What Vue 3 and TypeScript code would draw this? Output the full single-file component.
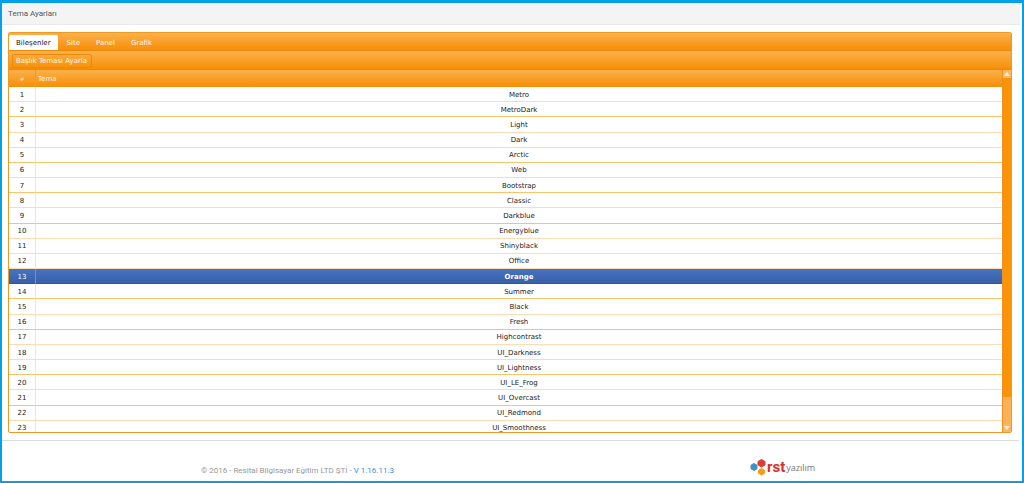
<script setup lang="ts">
import { ref } from 'vue'

const tabs: string[] = ['Bileşenler', 'Site', 'Panel', 'Grafik']
const activeTab = ref(0)
const selected = ref(12)
const themes: string[] = [
  'Metro', 'MetroDark', 'Light', 'Dark', 'Arctic', 'Web', 'Bootstrap', 'Classic',
  'Darkblue', 'Energyblue', 'Shinyblack', 'Office', 'Orange', 'Summer', 'Black',
  'Fresh', 'Highcontrast', 'UI_Darkness', 'UI_Lightness', 'UI_LE_Frog',
  'UI_Overcast', 'UI_Redmond', 'UI_Smoothness',
]
const strongLines: number[] = [1, 4, 6, 8, 13, 15, 18, 20]
</script>

<template>
  <div class="page">
    <header class="title">Tema Ayarları</header>
    <main class="content">
      <section class="panel">
        <nav class="tabs">
          <button
            v-for="(tab, i) in tabs"
            :key="tab"
            type="button"
            class="tab"
            :class="{ active: i === activeTab }"
            @click="activeTab = i"
          >{{ tab }}</button>
        </nav>
        <div class="toolbar">
          <button type="button" class="apply">Başlık Teması Ayarla</button>
        </div>
        <div class="grid">
          <div class="scroller">
            <table>
              <thead>
                <tr><th class="num">#</th><th class="name">Tema</th></tr>
              </thead>
              <tbody>
                <tr
                  v-for="(theme, i) in themes"
                  :key="theme"
                  :class="{ selected: i === selected, strong: strongLines.includes(i) }"
                  @click="selected = i"
                >
                  <td class="num">{{ i + 1 }}</td>
                  <td>{{ theme }}</td>
                </tr>
              </tbody>
            </table>
          </div>
          <div class="scrollbar">
            <button type="button" class="arrow" aria-label="Yukarı">
              <svg viewBox="0 0 6 4" width="6" height="4"><path d="M3 0 6 4H0Z" fill="#fff3df" /></svg>
            </button>
            <div class="thumb"></div>
            <div class="track"></div>
            <button type="button" class="arrow" aria-label="Aşağı">
              <svg viewBox="0 0 6 4" width="6" height="4"><path d="M3 4 0 0H6Z" fill="#fff3df" /></svg>
            </button>
          </div>
        </div>
      </section>
    </main>
    <footer class="footer">
      <p class="copy">© 2016 - Resital Bilgisayar Eğitim LTD ŞTİ - <a href="#">V 1.16.11.3</a></p>
      <div class="logo">
        <svg viewBox="0 0 17 18" width="17" height="18">
          <path d="M4 5.5 7 7.2V10.8L4 12.5 1 10.8V7.2Z" fill="#3f8fcb" stroke="#3f8fcb" stroke-linejoin="round" />
          <path d="M11.5 1.5 15 3.5V7L11.5 9 8 7V3.5Z" fill="#e03a32" stroke="#e03a32" stroke-linejoin="round" />
          <path d="M11.5 10.5 14.5 12.2V15.3L11.5 17 8.5 15.3V12.2Z" fill="#f79b1c" stroke="#f79b1c" stroke-linejoin="round" />
        </svg>
        <span class="rst">rst</span><span class="yazilim">yazılım</span>
      </div>
    </footer>
  </div>
</template>

<style>
body {
  margin: 0;
}
</style>

<style scoped>
.page {
  box-sizing: border-box;
  display: flex;
  flex-direction: column;
  min-height: 100vh;
  border: 2px solid #06a0e8;
  border-top-width: 3px;
  background: #fff;
  font-family: Roboto, "Liberation Sans", Arial, sans-serif;
}
button {
  margin: 0;
  border: 0;
  font: inherit;
  cursor: pointer;
}
.title {
  margin-right: 2px;
  padding: 0 6px;
  border-bottom: 1px solid #e9e9e9;
  background: #f4f4f4;
  color: #555;
  font-size: 8px;
  line-height: 21px;
}
.content {
  margin-right: 3px;
  padding: 7px 7px 7px 6px;
  border-bottom: 1px solid #d9dfdc;
}
.panel {
  overflow: hidden;
  border: 1px solid #ec9a28;
  border-radius: 2px;
  font-family: "DejaVu Sans", Verdana, sans-serif;
  font-size: 7px;
}
.tabs,
.toolbar,
th {
  background: linear-gradient(#fbb04c, #f78f05);
  color: #fff8ec;
}
.tabs {
  display: flex;
  box-sizing: border-box;
  height: 18px;
  padding-top: 2px;
  border-bottom: 1px solid #e98a0b;
}
.tab {
  padding: 0 8px;
  background: transparent;
  color: inherit;
}
.tab.active {
  margin-right: 1px;
  padding: 0 7px;
  border-radius: 2px 2px 0 0;
  background: #fff;
  color: #222;
}
.toolbar {
  display: flex;
  align-items: center;
  box-sizing: border-box;
  height: 19px;
  padding: 2px 3px 0;
  border-bottom: 1px solid #e98a0b;
}
.apply {
  height: 14px;
  padding: 0 4px 0 3px;
  border: 1px solid #e98a0b;
  border-radius: 2px;
  background: transparent;
  color: inherit;
}
.grid {
  display: flex;
  height: 362px;
}
.scroller {
  flex: 1;
  overflow: hidden;
}
table {
  width: 100%;
  height: 366px;
  border-collapse: separate;
  border-spacing: 0;
  table-layout: fixed;
}
th {
  box-sizing: border-box;
  height: 17px;
  padding: 1px 0 0;
  font-weight: 400;
  text-align: left;
}
th.name {
  padding-left: 2px;
}
.num {
  width: 26px;
  border-right: 1px solid #fbe3cf;
  text-align: center;
}
th.num {
  width: 27px;
  border-right-color: #f0992a;
  font-size: 5px;
}
td {
  padding: 2px 0 0;
  border-bottom: 1px solid #fbdcb6;
  color: #222;
  line-height: 9px;
  text-align: center;
}
.strong td {
  border-bottom-color: #f9c46c;
}
.selected td {
  border-bottom-color: #33559a;
  background: linear-gradient(#4573c0, #3960a8);
  color: #fff;
  font-weight: 700;
}
.selected .num {
  border-right-color: #6f93cf;
  font-weight: 400;
}
.scrollbar {
  display: flex;
  flex-direction: column;
  box-sizing: border-box;
  width: 9px;
  border-left: 1px solid #ec9122;
  background: #fbb156;
}
.arrow {
  display: flex;
  align-items: center;
  justify-content: center;
  height: 8px;
  padding: 0;
  background: #fbb763;
}
.thumb {
  flex: 320;
  background: #fb9306;
}
.track {
  flex: 27;
}
.footer {
  display: grid;
  grid-template-columns: 199px 549px 1fr;
  align-items: center;
  flex: 1;
  padding-top: 12px;
}
.copy {
  grid-column: 2;
  margin: 0;
  padding-top: 6px;
  color: #999;
  font-size: 8px;
}
.copy a {
  color: #3a8fd9;
  text-decoration: none;
}
.logo {
  display: flex;
  align-items: center;
}
.rst {
  color: #d9302c;
  font-size: 15px;
  font-weight: 700;
  line-height: 18px;
}
.yazilim {
  margin-left: 1px;
  padding-top: 2px;
  color: #777;
  font-family: "Open Sans", sans-serif;
  font-size: 9px;
  line-height: 18px;
}
</style>
